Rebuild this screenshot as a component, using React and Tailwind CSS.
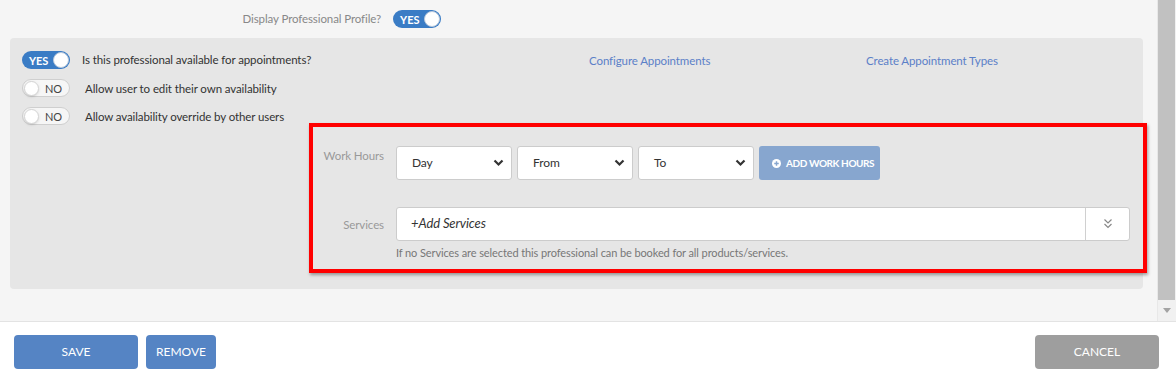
const font = { fontFamily: "Lato, 'Open Sans', sans-serif" };

const Chevron = () => (
    <svg width="11" height="8" viewBox="0 0 11 8" className="shrink-0">
        <polyline points="1.5,1.5 5.5,5.5 9.5,1.5" fill="none" stroke="#333" strokeWidth="2.2" />
    </svg>
);

const ToggleYes = () => (
    <div className="flex h-[18px] w-[48px] items-center justify-between rounded-full bg-[#3a7cc5] pl-[7px] pr-[1px]">
        <span className="text-[11px] font-bold leading-none text-white">YES</span>
        <span className="h-[16px] w-[16px] rounded-full border border-[#b9c9dc] bg-white" />
    </div>
);

const ToggleNo = () => (
    <div className="flex h-[18px] w-[48px] items-center justify-between rounded-full border border-[#cfcfcf] bg-[#f6f6f6] pl-[1px] pr-[7px]">
        <span className="h-[15px] w-[15px] rounded-full border border-[#d4d4d4] bg-white shadow-sm" />
        <span className="text-[11px] leading-none text-[#444]">NO</span>
    </div>
);

const Select = ({ label }) => (
    <div className="flex h-[34px] w-[116px] items-center justify-between rounded-[3px] border border-[#cccccc] bg-white pl-[15px] pr-[7px]">
        <span className="text-[12px] text-[#333]">{label}</span>
        <Chevron />
    </div>
);

const App = () => {
    return (
        <div className="h-[378px] w-[1176px] overflow-hidden bg-white" style={font}>
            <div className="flex h-[322px] border-b border-[#e3e3e3] bg-[#f5f5f5]">
                <div className="flex-1 pt-[10px]">
                    <div className="flex items-center gap-[12px]">
                        <span className="w-[381px] text-right text-[11.5px] tracking-[-0.1px] text-[#888]">Display Professional Profile?</span>
                        <ToggleYes />
                    </div>

                    <div className="relative ml-[10px] mr-[14px] mt-[10px] h-[251px] rounded-[4px] bg-[#e6e6e6] pl-[12px] pt-[13px] text-[11.5px] tracking-[-0.1px]">
                        <div className="flex h-[18px] items-center">
                            <div className="flex w-[567px] items-center gap-[12px]">
                                <ToggleYes />
                                <span className="text-[#333]">Is this professional available for appointments?</span>
                            </div>
                            <span className="mt-[2px] w-[277px] text-[#5b80c8]">Configure Appointments</span>
                            <span className="mt-[2px] text-[#5b80c8]">Create Appointment Types</span>
                        </div>
                        <div className="mt-[10px] flex h-[18px] items-center gap-[15px]">
                            <ToggleNo />
                            <span className="mt-[2px] text-[#333]">Allow user to edit their own availability</span>
                        </div>
                        <div className="mt-[10px] flex h-[18px] items-center gap-[15px]">
                            <ToggleNo />
                            <span className="mt-[2px] text-[#333]">Allow availability override by other users</span>
                        </div>

                        <div className="ml-[288px] mt-[21px] flex gap-[12px]">
                            <span className="w-[74px] pt-[1px] text-right text-[#999]">Work Hours</span>
                            <div className="flex gap-[5px]">
                                <Select label="Day" />
                                <Select label="From" />
                                <Select label="To" />
                                <button className="flex h-[34px] w-[121px] items-center gap-[5px] rounded-[3px] bg-[#87a6cf] pl-[13px]">
                                    <svg width="9" height="9" viewBox="0 0 10 10">
                                        <circle cx="5" cy="5" r="5" fill="white" />
                                        <path d="M5 2.5v5M2.5 5h5" stroke="#87a6cf" strokeWidth="1.6" />
                                    </svg>
                                    <span className="text-[10px] font-bold tracking-[-0.4px] text-white">ADD WORK HOURS</span>
                                </button>
                            </div>
                        </div>

                        <div className="ml-[288px] mt-[27px] flex gap-[12px]">
                            <span className="w-[74px] pt-[9px] text-right text-[#999]">Services</span>
                            <div>
                                <div className="flex h-[34px] w-[734px] items-center rounded-[3px] border border-[#cccccc] bg-white">
                                    <span className="flex-1 pl-[14px] text-[13px] italic text-[#333]">+Add Services</span>
                                    <div className="flex h-full w-[44px] items-center justify-center border-l border-[#d0d0d0]">
                                        <svg width="10" height="12" viewBox="0 0 10 12">
                                            <polyline points="1.5,1.5 5,5 8.5,1.5" fill="none" stroke="#888" strokeWidth="1.2" />
                                            <polyline points="1.5,6 5,9.5 8.5,6" fill="none" stroke="#888" strokeWidth="1.2" />
                                        </svg>
                                    </div>
                                </div>
                                <p className="mt-[4px] text-[11px] text-[#777]">
                                    If no Services are selected this professional can be booked for all products/services.
                                </p>
                            </div>
                        </div>

                        <div className="pointer-events-none absolute left-[299px] top-[85px] h-[150px] w-[838px] border-[4px] border-[#ff0000] shadow-[1px_2px_3px_rgba(0,0,0,0.35)]" />
                    </div>
                </div>

                <div className="flex w-[19px] flex-col border-l border-[#e8e8e8] bg-[#f1f1f1]">
                    <div className="mr-[1px] h-[300px] bg-[#c1c1c1]" />
                    <div className="flex flex-1 items-center justify-center">
                        <svg width="8" height="5" viewBox="0 0 8 5">
                            <polygon points="0,0 8,0 4,5" fill="#a3a3a3" />
                        </svg>
                    </div>
                </div>
            </div>

            <div className="flex items-center justify-between px-[14px] pr-[17px] pt-[13px]">
                <div className="flex gap-[8px]">
                    <button className="h-[34px] w-[124px] rounded-[4px] bg-[#5584c4] text-[12px] text-white">SAVE</button>
                    <button className="h-[34px] w-[70px] rounded-[4px] bg-[#5584c4] text-[12px] text-white">REMOVE</button>
                </div>
                <button className="h-[34px] w-[124px] rounded-[4px] bg-[#9e9e9e] text-[12px] text-white">CANCEL</button>
            </div>
        </div>
    );
};

export default App;
